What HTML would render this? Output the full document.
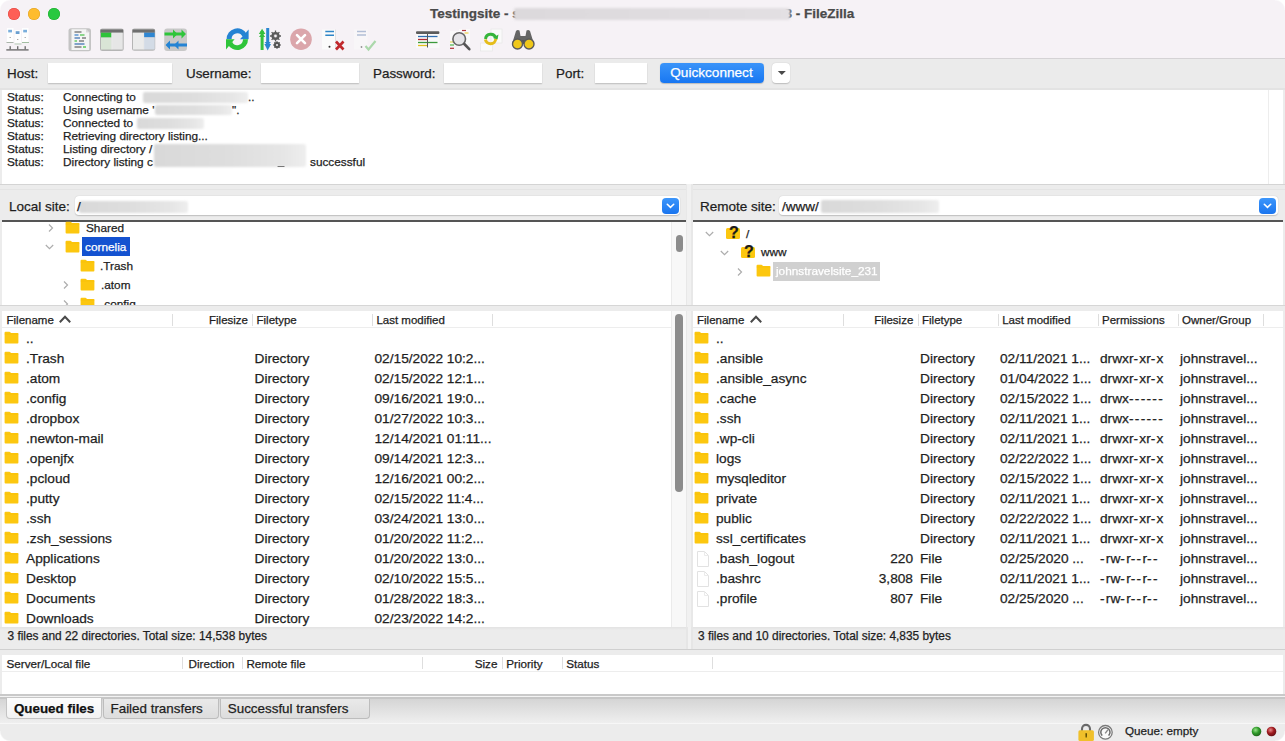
<!DOCTYPE html>
<html><head><meta charset="utf-8">
<style>
*{margin:0;padding:0;box-sizing:border-box}
html,body{width:1285px;height:741px;overflow:hidden;background:#ececec;font-family:"Liberation Sans",sans-serif;color:#1e1e1e}
.a{position:absolute}
.t{position:absolute;white-space:nowrap;line-height:1;-webkit-text-stroke:0.25px currentColor}
.inp{position:absolute;background:#fff;box-shadow:0 0.5px 1.2px rgba(0,0,0,.2)}
.blur{position:absolute;background:linear-gradient(90deg,#d9d9d9,#dedede 50%,#e6e6e6 85%,#eeeeee);filter:blur(1.2px);border-radius:2px}
.sep{position:absolute;width:1px;background:#e0e0e0}
</style></head><body>
<div class="a" style="left:0px;top:0px;width:1285px;height:58px;background:#f6f2f6;"></div>
<div class="a" style="left:0px;top:58px;width:1285px;height:1px;background:#d5d3d5;"></div>
<div class="a" style="left:8px;top:8px;width:12px;height:12px;border-radius:50%;background:#fe5f57;box-shadow:inset 0 0 0 0.5px #e0443e"></div>
<div class="a" style="left:28px;top:8px;width:12px;height:12px;border-radius:50%;background:#febc2e;box-shadow:inset 0 0 0 0.5px #dea123"></div>
<div class="a" style="left:48px;top:8px;width:12px;height:12px;border-radius:50%;background:#28c840;box-shadow:inset 0 0 0 0.5px #1aab29"></div>
<div class="t" style="left:430px;top:7.37px;font-size:13.5px;color:#4a4a4a;font-weight:bold;">Testingsite - s</div>
<div class="t" style="left:784.5px;top:7.37px;font-size:13.5px;color:#4a4a4a;font-weight:bold;">3 - FileZilla</div>
<div class="blur" style="left:514px;top:7.5px;width:276px;height:12px;background:linear-gradient(90deg,#dcd9dc,#e0dde0 60%,#e3e0e3)"></div>
<svg class="a" style="left:0;top:0" width="560" height="58" viewBox="0 0 560 58">
<!-- site manager -->
<g>
 <rect x="7" y="28" width="6.5" height="14" fill="#fff" opacity=".9"/>
 <rect x="14.5" y="30" width="6.5" height="13" fill="#fff" opacity=".9"/>
 <rect x="22" y="28" width="6.5" height="14" fill="#fff" opacity=".9"/>
 <rect x="8.2" y="29.8" width="3.8" height="2.6" fill="#7aaedc"/>
 <rect x="15.7" y="31.2" width="3.8" height="2.8" fill="#6a9fd0"/>
 <rect x="23.2" y="29.8" width="3.8" height="2.6" fill="#7aaedc"/>
 <rect x="9.6" y="37.2" width="1.2" height=".8" fill="#888"/>
 <rect x="17.1" y="39.2" width="1.2" height=".8" fill="#888"/>
 <rect x="24.6" y="37.2" width="1.2" height=".8" fill="#888"/>
 <rect x="6.5" y="42.2" width="7" height=".7" fill="#8a9a8a"/>
 <rect x="14.5" y="43.6" width="7" height=".8" fill="#a9c4a9"/>
 <rect x="22" y="42.2" width="7" height=".7" fill="#7fa87f"/>
 <rect x="9.5" y="46.2" width="1.4" height="3.2" fill="#707070"/>
 <rect x="17" y="46.2" width="1.4" height="3.2" fill="#707070"/>
 <rect x="24.5" y="46.2" width="1.4" height="3.2" fill="#707070"/>
 <rect x="6.3" y="49.2" width="22.3" height="1.4" fill="#6e6e6e"/>
</g>
<!-- message log -->
<g>
 <rect x="68.5" y="28.2" width="22.5" height="23" rx="2.5" fill="#c4c4c4"/>
 <path d="M71.5 29.2 H86 L89.2 32.4 V50 H71.5 Z" fill="#f4f4f4"/>
 <path d="M86 29.2 V32.4 H89.2 Z" fill="#d9d9d9"/>
 <g stroke-width="1.4">
 <path d="M74.5 32 H81.5" stroke="#777"/>
 <path d="M74.5 35 H78.5" stroke="#4f8fd0"/><path d="M80 35 H84.5" stroke="#5cc85c"/>
 <path d="M74.5 38 H80" stroke="#4f7fb8"/><path d="M82 38 H86" stroke="#777"/>
 <path d="M74.5 41 H77" stroke="#5cc85c"/><path d="M79 41 H84" stroke="#777"/>
 <path d="M74.5 44 H84.5" stroke="#4f7fb8"/>
 <path d="M74.5 47 H81.5" stroke="#777"/><path d="M83 47 H86" stroke="#4cc84c"/>
 </g>
</g>
<!-- local tree -->
<g>
 <rect x="100" y="28.5" width="23.7" height="22.5" rx="2.5" fill="#b5b5b5"/>
 <rect x="100.5" y="29.5" width="22.7" height="3.2" fill="#6e6e6e"/>
 <rect x="101" y="32.7" width="10.5" height="4.8" fill="#2fc23a"/>
 <rect x="101" y="37.5" width="10.5" height="12" fill="#d9e5d6"/>
 <rect x="112" y="32.7" width="10.7" height="16.8" fill="#e6e6e6"/>
 <rect x="111.5" y="32.7" width="0.6" height="16.8" fill="#fff"/>
</g>
<!-- remote tree -->
<g>
 <rect x="132" y="28.6" width="23.2" height="22.2" rx="2.5" fill="#b5b5b5"/>
 <rect x="132.5" y="29.5" width="22.2" height="3.2" fill="#6e6e6e"/>
 <rect x="133" y="32.7" width="10.5" height="16.8" fill="#ebebeb"/>
 <rect x="144" y="32.7" width="10.7" height="4.6" fill="#2f86d2"/>
 <rect x="144" y="37.3" width="10.7" height="12.2" fill="#d3dbe6"/>
 <rect x="143.5" y="32.7" width="0.6" height="16.8" fill="#fff"/>
</g>
<!-- transfer queue -->
<g>
 <rect x="164.2" y="28.6" width="22.8" height="22.4" rx="3" fill="#c8c8c8"/>
 <path d="M164.5 32.4 H173 V29.5 L177.5 34 L173 38.5 V35.6 H164.5 Z" fill="#2ec53a"/>
 <path d="M174 32.4 H181.5 V29.5 L186 34 L181.5 38.5 V35.6 H174 Z" fill="#2ec53a"/>
 <path d="M187 43.4 H178.5 V40.5 L174 45 L178.5 49.5 V46.6 H187 Z" fill="#2483d4"/>
 <path d="M178 43.4 H170 V40.5 L165.5 45 L170 49.5 V46.6 H178 Z" fill="#2483d4"/>
</g>
<!-- refresh -->
<g>
 <path d="M229.1 39.2 A8.2 8.2 0 0 1 244.6 35.3" stroke="#2583d3" stroke-width="5" fill="none"/>
 <path d="M240 39.2 L248.6 39.2 L248.6 29.6 Z" fill="#2583d3"/>
 <path d="M245.5 39.2 A8.2 8.2 0 0 1 230.0 43.1" stroke="#2fc43a" stroke-width="5" fill="none"/>
 <path d="M234.6 39.2 L226 39.2 L226 49.6 Z" fill="#2fc43a"/>
</g>
<!-- filter settings -->
<g>
 <rect x="260.6" y="31" width="3" height="19" fill="#34c03e"/>
 <path d="M258.8 34 L262.1 28.8 L265.4 34 Z" fill="#34c03e"/>
 <path d="M259 37 L262.1 33 L265.2 37 Z" fill="#34c03e"/>
 <rect x="266.2" y="28" width="3" height="19" fill="#2a85d0"/>
 <path d="M264.4 44 L267.7 50.5 L271 44 Z" fill="#2a85d0"/>
 <path d="M264.6 42 L267.7 46 L270.8 42 Z" fill="#2a85d0"/>
 <circle cx="275.5" cy="36" r="3.1" fill="none" stroke="#5a5a5a" stroke-width="2"/>
 <g stroke="#5a5a5a" stroke-width="1.3">
  <path d="M275.5 30.5 V41.5 M270 36 H281 M271.6 32.1 L279.4 39.9 M271.6 39.9 L279.4 32.1"/>
 </g>
 <circle cx="275.5" cy="36" r="1.4" fill="#f6f2f6"/>
 <circle cx="277" cy="45" r="2.2" fill="none" stroke="#555" stroke-width="1.8"/>
 <g stroke="#555" stroke-width="1.3">
  <path d="M277 41.3 V48.7 M273.3 45 H280.7 M274.4 42.4 L279.6 47.6 M274.4 47.6 L279.6 42.4"/>
 </g>
 <circle cx="277" cy="45" r="1" fill="#f6f2f6"/>
</g>
<!-- cancel -->
<g>
 <circle cx="301" cy="39.2" r="10.8" fill="#dba6ab"/>
 <path d="M297 35.2 L305 43.2 M305 35.2 L297 43.2" stroke="#fff" stroke-width="2.6" stroke-linecap="round"/>
</g>
<!-- disconnect -->
<g>
 <path d="M322 29.5 H335.5 V49.5 H322 Z" fill="#fbfbfb"/>
 <path d="M335.5 29.5 V49.5" stroke="#e2e2e2" stroke-width="1"/>
 <path d="M325.3 31.5 H334 M325.3 35.3 H334" stroke="#2f86c8" stroke-width="1.6"/>
 <circle cx="329.5" cy="46.7" r="1" fill="#333"/>
 <path d="M336 41.5 L343.5 49.5 M343.5 41.5 L336 49.5" stroke="#c0282c" stroke-width="2.6"/>
</g>
<!-- reconnect -->
<g opacity=".55">
 <path d="M354 29.5 H367.5 V49.5 H354 Z" fill="#fbfbfb"/>
 <path d="M357 31.5 H366 M357 35 H366" stroke="#7b95bd" stroke-width="1.5"/>
 <circle cx="361.5" cy="47" r="0.9" fill="#444"/>
 <path d="M365.5 46 L368.5 49.5 L375.5 41" stroke="#6fc36f" stroke-width="2.2" fill="none"/>
</g>
<!-- directory listing filter -->
<g>
 <rect x="416" y="31.5" width="23.4" height="16.5" fill="#f9f9f9"/>
 <rect x="416" y="31.2" width="23.4" height="2.8" rx="1" fill="#5c5c5c"/>
 <path d="M418 36.5 H437.5" stroke="#2f6fb2" stroke-width="1.3"/>
 <path d="M418 39.5 H427" stroke="#b12b33" stroke-width="1.3"/>
 <path d="M418 42.5 H437.5" stroke="#3b9a3b" stroke-width="1.3"/>
 <path d="M418 45.5 H427" stroke="#e0c020" stroke-width="1.3"/>
 <path d="M427.5 34 V47.5" stroke="#555" stroke-width="1"/>
</g>
<!-- search -->
<g>
 <rect x="450" y="31" width="12" height="15" fill="#fafafa"/>
 <rect x="459" y="29" width="11" height="15" fill="#fafafa"/>
 <path d="M462 30.5 H466" stroke="#b53a3f" stroke-width="1.2"/>
 <path d="M464.5 33 H468.5" stroke="#ecd24a" stroke-width="1.2"/>
 <path d="M450 42 H454" stroke="#e8d85a" stroke-width="1.2"/>
 <path d="M450 45 H454" stroke="#48b048" stroke-width="1.2"/>
 <path d="M450 48.3 H454" stroke="#b03038" stroke-width="1.2"/>
 <circle cx="459.2" cy="39" r="6.3" fill="#e5e5e8" stroke="#666" stroke-width="1.6"/>
 <path d="M464.3 44 L469.3 49.2" stroke="#555" stroke-width="2.6" stroke-linecap="round"/>
</g>
<!-- compare -->
<g>
 <rect x="491" y="29" width="11" height="14" fill="#fafafa" stroke="#e4e4e4" stroke-width=".6"/>
 <rect x="480.5" y="43" width="12" height="8" fill="#fafafa" stroke="#e4e4e4" stroke-width=".6"/>
 <path d="M485.5 39 A5.3 5.3 0 0 1 495.8 38" stroke="#35b43a" stroke-width="3" fill="none"/>
 <path d="M498.5 34.5 L497.5 39.5 L493 38 Z" fill="#35b43a"/>
 <path d="M495.7 39 A5.2 5.2 0 0 1 485.4 39.5" stroke="#e5bd1a" stroke-width="3" fill="none"/>
</g>
<!-- binoculars -->
<g>
 <path d="M516 31 Q517.5 29.5 519.5 30.5 L520.5 36 L525.5 36 L526.5 30.5 Q528.5 29.5 530 31 L534 44 H512 Z" fill="#656565"/>
 <rect x="521" y="40" width="4" height="4" fill="#555"/>
 <circle cx="517.5" cy="44" r="5" fill="#f0c81a" stroke="#5a5a5a" stroke-width="1.4"/>
 <circle cx="529" cy="44" r="5" fill="#f0c81a" stroke="#5a5a5a" stroke-width="1.4"/>
</g>
</svg>
<div class="a" style="left:0px;top:59px;width:1285px;height:30px;background:#ebebeb;"></div>
<div class="a" style="left:0px;top:88px;width:1285px;height:2px;background:#e3e3e3;"></div>
<div class="t" style="left:7px;top:67.06px;font-size:13.4px;color:#1e1e1e;font-weight:normal;">Host:</div>
<div class="inp" style="left:48px;top:63px;width:124px;height:20.3px"></div>
<div class="t" style="left:186px;top:67.06px;font-size:13.4px;color:#1e1e1e;font-weight:normal;">Username:</div>
<div class="inp" style="left:261px;top:63px;width:98px;height:20.3px"></div>
<div class="t" style="left:373px;top:67.06px;font-size:13.4px;color:#1e1e1e;font-weight:normal;">Password:</div>
<div class="inp" style="left:444px;top:63px;width:98px;height:20.3px"></div>
<div class="t" style="left:556px;top:67.06px;font-size:13.4px;color:#1e1e1e;font-weight:normal;">Port:</div>
<div class="inp" style="left:594.7px;top:63px;width:52.3px;height:20.3px"></div>
<div class="a" style="left:660px;top:63px;width:104px;height:20px;border-radius:4px;background:linear-gradient(#3a94f9,#1877f2);box-shadow:0 0.5px 1px rgba(0,0,0,.2)"></div>
<div class="t" style="left:670.3px;top:65.99px;font-size:13.6px;color:#fff;font-weight:normal;">Quickconnect</div>
<div class="inp" style="left:771.8px;top:63px;width:18.4px;height:20.2px;border-radius:4px"></div>
<svg class="a" style="left:775.5px;top:69.3px" width="11" height="8"><path d="M1.8 2 L9.8 2 L5.8 6 Z" fill="#4a4a4a"/></svg>
<div class="a" style="left:2px;top:90px;width:1281px;height:94px;background:#fff;"></div>
<div class="a" style="left:1268px;top:90px;width:1px;height:94px;background:#ededed;"></div>
<div class="t" style="left:7px;top:92.41px;font-size:11.8px;color:#1e1e1e;font-weight:normal;">Status:</div>
<div class="t" style="left:63px;top:92.41px;font-size:11.8px;color:#1e1e1e;font-weight:normal;">Connecting to</div>
<div class="t" style="left:7px;top:105.36px;font-size:11.8px;color:#1e1e1e;font-weight:normal;">Status:</div>
<div class="t" style="left:63px;top:105.36px;font-size:11.8px;color:#1e1e1e;font-weight:normal;">Using username '</div>
<div class="t" style="left:7px;top:118.31px;font-size:11.8px;color:#1e1e1e;font-weight:normal;">Status:</div>
<div class="t" style="left:63px;top:118.31px;font-size:11.8px;color:#1e1e1e;font-weight:normal;">Connected to</div>
<div class="t" style="left:7px;top:131.26px;font-size:11.8px;color:#1e1e1e;font-weight:normal;">Status:</div>
<div class="t" style="left:63px;top:131.26px;font-size:11.8px;color:#1e1e1e;font-weight:normal;">Retrieving directory listing...</div>
<div class="t" style="left:7px;top:144.21px;font-size:11.8px;color:#1e1e1e;font-weight:normal;">Status:</div>
<div class="t" style="left:63px;top:144.21px;font-size:11.8px;color:#1e1e1e;font-weight:normal;">Listing directory /</div>
<div class="t" style="left:7px;top:157.16px;font-size:11.8px;color:#1e1e1e;font-weight:normal;">Status:</div>
<div class="t" style="left:63px;top:157.16px;font-size:11.8px;color:#1e1e1e;font-weight:normal;">Directory listing c</div>
<div class="t" style="left:310px;top:157.16px;font-size:11.8px;color:#1e1e1e;font-weight:normal;">successful</div>
<div class="blur" style="left:143px;top:92px;width:105px;height:11px"></div>
<div class="t" style="left:248px;top:92.41px;font-size:11.8px;color:#1e1e1e;font-weight:normal;">..</div>
<div class="blur" style="left:155px;top:105px;width:77px;height:10px"></div>
<div class="t" style="left:232px;top:105.36px;font-size:11.8px;color:#1e1e1e;font-weight:normal;">".</div>
<div class="blur" style="left:137px;top:118px;width:67px;height:11px"></div>
<div class="blur" style="left:154px;top:144.3px;width:152px;height:22.5px"></div><div class="t" style="left:278px;top:156px;font-size:11px;color:#666;filter:blur(0.4px)">_</div>
<div class="a" style="left:0px;top:184px;width:1285px;height:1px;background:#d4d4d4;"></div>
<div class="a" style="left:0px;top:189px;width:1285px;height:1px;background:#e4e4e4;"></div>
<div class="t" style="left:9px;top:199.77px;font-size:13.5px;color:#1e1e1e;font-weight:normal;">Local site:</div>
<div class="inp" style="left:75px;top:196px;width:605px;height:19px;border-radius:4px"></div>
<div class="blur" style="left:79px;top:201px;width:108.5px;height:12.2px"></div>
<div class="t" style="left:77px;top:199.77px;font-size:13.5px;color:#1e1e1e;font-weight:normal;">/</div>
<div class="t" style="left:700px;top:199.77px;font-size:13.5px;color:#1e1e1e;font-weight:normal;">Remote site:</div>
<div class="inp" style="left:779px;top:196px;width:498.5px;height:19px;border-radius:4px"></div>
<div class="t" style="left:782px;top:199.77px;font-size:13.5px;color:#1e1e1e;font-weight:normal;">/www/</div>
<div class="blur" style="left:820.5px;top:200px;width:118.3px;height:12.6px"></div>
<div class="a" style="left:662px;top:198px;width:17px;height:15.5px;border-radius:4px;background:linear-gradient(#3c96fb,#1a75ef)"></div>
<svg class="a" style="left:662px;top:198px" width="17" height="16"><path d="M5.3 6.3 L8.5 9.4 L11.7 6.3" stroke="#fff" stroke-width="1.6" fill="none" stroke-linecap="round"/></svg>
<div class="a" style="left:1259px;top:198px;width:17px;height:15.5px;border-radius:4px;background:linear-gradient(#3c96fb,#1a75ef)"></div>
<svg class="a" style="left:1259px;top:198px" width="17" height="16"><path d="M5.3 6.3 L8.5 9.4 L11.7 6.3" stroke="#fff" stroke-width="1.6" fill="none" stroke-linecap="round"/></svg>
<div class="a" style="left:686px;top:184px;width:7px;height:465px;background:#e8e8e8;"></div>
<div class="a" style="left:687.4px;top:184px;width:4px;height:465px;background:#f1f1f1;"></div>
<div class="a" style="left:2px;top:220px;width:684px;height:85px;background:#fff;"></div>
<div class="a" style="left:2px;top:220px;width:684px;height:1.5px;background:#555;"></div>
<div class="a" style="left:693px;top:220px;width:590px;height:85px;background:#fff;"></div>
<div class="a" style="left:693px;top:220px;width:590px;height:1.5px;background:#555;"></div>
<div class="a" style="left:0px;top:305px;width:1285px;height:1px;background:#d6d6d6;"></div>
<div class="a" style="left:671px;top:221.5px;width:15px;height:83.5px;background:#f8f8f8;"></div>
<div class="a" style="left:671px;top:221.5px;width:1px;height:83.5px;background:#ebebeb;"></div>
<div class="a" style="left:675.5px;top:234.6px;width:7.5px;height:17.7px;border-radius:4px;background:#8c8c8c"></div>
<svg class="a" style="left:46.5px;top:223px" width="8" height="10"><path d="M2 1.5 L5.5 5 L2 8.5" stroke="#adadad" stroke-width="1.2" fill="none"/></svg>
<svg class="a" style="left:64.5px;top:221px" width="16" height="14" viewBox="0 0 16 14"><path d="M0.6 1.6 Q0.6 0.7 1.5 0.7 H5.4 Q6 0.7 6.4 1.2 L6.9 1.9 H13.5 Q14.4 1.9 14.4 2.8 V11.6 Q14.4 12.5 13.5 12.5 H1.5 Q0.6 12.5 0.6 11.6 Z" fill="#fcc70f"/><path d="M0.6 3 H14.4" stroke="#f4b800" stroke-width=".5"/></svg>
<div class="t" style="left:86px;top:222.51px;font-size:11.8px;color:#1e1e1e;font-weight:normal;">Shared</div>
<svg class="a" style="left:44px;top:243px" width="11" height="8"><path d="M1.8 2 L5.5 5.6 L9.2 2" stroke="#adadad" stroke-width="1.2" fill="none"/></svg>
<svg class="a" style="left:64.5px;top:240px" width="16" height="14" viewBox="0 0 16 14"><path d="M0.6 1.6 Q0.6 0.7 1.5 0.7 H5.4 Q6 0.7 6.4 1.2 L6.9 1.9 H13.5 Q14.4 1.9 14.4 2.8 V11.6 Q14.4 12.5 13.5 12.5 H1.5 Q0.6 12.5 0.6 11.6 Z" fill="#fcc70f"/><path d="M0.6 3 H14.4" stroke="#f4b800" stroke-width=".5"/></svg>
<div class="a" style="left:82.3px;top:237.2px;width:47.7px;height:18.6px;background:#1452d0;"></div>
<div class="t" style="left:85px;top:241.51px;font-size:11.8px;color:#fff;font-weight:normal;">cornelia</div>
<svg class="a" style="left:79.5px;top:259px" width="16" height="14" viewBox="0 0 16 14"><path d="M0.6 1.6 Q0.6 0.7 1.5 0.7 H5.4 Q6 0.7 6.4 1.2 L6.9 1.9 H13.5 Q14.4 1.9 14.4 2.8 V11.6 Q14.4 12.5 13.5 12.5 H1.5 Q0.6 12.5 0.6 11.6 Z" fill="#fcc70f"/><path d="M0.6 3 H14.4" stroke="#f4b800" stroke-width=".5"/></svg>
<div class="t" style="left:100px;top:260.51px;font-size:11.8px;color:#1e1e1e;font-weight:normal;">.Trash</div>
<svg class="a" style="left:61.7px;top:280px" width="8" height="10"><path d="M2 1.5 L5.5 5 L2 8.5" stroke="#adadad" stroke-width="1.2" fill="none"/></svg>
<svg class="a" style="left:79.5px;top:278px" width="16" height="14" viewBox="0 0 16 14"><path d="M0.6 1.6 Q0.6 0.7 1.5 0.7 H5.4 Q6 0.7 6.4 1.2 L6.9 1.9 H13.5 Q14.4 1.9 14.4 2.8 V11.6 Q14.4 12.5 13.5 12.5 H1.5 Q0.6 12.5 0.6 11.6 Z" fill="#fcc70f"/><path d="M0.6 3 H14.4" stroke="#f4b800" stroke-width=".5"/></svg>
<div class="t" style="left:101px;top:279.51px;font-size:11.8px;color:#1e1e1e;font-weight:normal;">.atom</div>
<svg class="a" style="left:61.7px;top:299px" width="8" height="10"><path d="M2 1.5 L5.5 5 L2 8.5" stroke="#adadad" stroke-width="1.2" fill="none"/></svg>
<svg class="a" style="left:79.5px;top:297px" width="16" height="14" viewBox="0 0 16 14"><path d="M0.6 1.6 Q0.6 0.7 1.5 0.7 H5.4 Q6 0.7 6.4 1.2 L6.9 1.9 H13.5 Q14.4 1.9 14.4 2.8 V11.6 Q14.4 12.5 13.5 12.5 H1.5 Q0.6 12.5 0.6 11.6 Z" fill="#fcc70f"/><path d="M0.6 3 H14.4" stroke="#f4b800" stroke-width=".5"/></svg>
<div class="t" style="left:101px;top:298.51px;font-size:11.8px;color:#1e1e1e;font-weight:normal;">.config</div>
<div class="a" style="left:0px;top:305px;width:1285px;height:6px;background:#ececec;"></div>
<div class="a" style="left:0px;top:305px;width:1285px;height:1px;background:#d6d6d6;"></div>
<svg class="a" style="left:704px;top:230px" width="11" height="8"><path d="M1.8 2 L5.5 5.6 L9.2 2" stroke="#adadad" stroke-width="1.2" fill="none"/></svg>
<div class="a" style="left:726px;top:226px;width:14px;height:13px"><div class="a" style="left:0;top:2px;width:14px;height:11px;background:#fcc70f;border-radius:1.5px"></div><div class="t" style="left:3px;top:-1px;font-size:16px;font-weight:bold;color:#1a1a1a">?</div></div>
<div class="t" style="left:746px;top:229.21px;font-size:11.8px;color:#1e1e1e;font-weight:normal;">/</div>
<svg class="a" style="left:719px;top:249px" width="11" height="8"><path d="M1.8 2 L5.5 5.6 L9.2 2" stroke="#adadad" stroke-width="1.2" fill="none"/></svg>
<div class="a" style="left:741px;top:245px;width:14px;height:13px"><div class="a" style="left:0;top:2px;width:14px;height:11px;background:#fcc70f;border-radius:1.5px"></div><div class="t" style="left:3px;top:-1px;font-size:16px;font-weight:bold;color:#1a1a1a">?</div></div>
<div class="t" style="left:761px;top:246.81px;font-size:11.8px;color:#1e1e1e;font-weight:normal;">www</div>
<svg class="a" style="left:736px;top:267px" width="8" height="10"><path d="M2 1.5 L5.5 5 L2 8.5" stroke="#adadad" stroke-width="1.2" fill="none"/></svg>
<svg class="a" style="left:755.5px;top:263.5px" width="16" height="14" viewBox="0 0 16 14"><path d="M0.6 1.6 Q0.6 0.7 1.5 0.7 H5.4 Q6 0.7 6.4 1.2 L6.9 1.9 H13.5 Q14.4 1.9 14.4 2.8 V11.6 Q14.4 12.5 13.5 12.5 H1.5 Q0.6 12.5 0.6 11.6 Z" fill="#fcc70f"/><path d="M0.6 3 H14.4" stroke="#f4b800" stroke-width=".5"/></svg>
<div class="a" style="left:772.9px;top:261.6px;width:107.1px;height:19.4px;background:#d0d0d0;"></div>
<div class="t" style="left:776px;top:266.31px;font-size:11.8px;color:#fff;font-weight:normal;filter:blur(0.6px)">johnstravelsite_231</div>
<div class="a" style="left:2px;top:311px;width:684px;height:317px;background:#fff;"></div>
<div class="a" style="left:693px;top:311px;width:590px;height:317px;background:#fff;"></div>
<div class="a" style="left:2px;top:327px;width:669px;height:1px;background:#ededed;"></div>
<div class="a" style="left:693px;top:327px;width:590px;height:1px;background:#ededed;"></div>
<div class="a" style="left:671px;top:311px;width:15px;height:317px;background:#f8f8f8;"></div>
<div class="a" style="left:671px;top:311px;width:1px;height:317px;background:#ebebeb;"></div>
<div class="a" style="left:675.2px;top:313.8px;width:7.8px;height:178px;border-radius:4px;background:#8c8c8c"></div>
<div class="t" style="left:6.5px;top:315.07px;font-size:11.5px;color:#1e1e1e;font-weight:normal;">Filename</div>
<svg class="a" style="left:58px;top:314px" width="14" height="10"><path d="M1.8 8.3 L7 2.8 L12.2 8.3" stroke="#4a4a4a" stroke-width="2" fill="none"/></svg>
<div class="t" style="right:1037px;top:315.07px;font-size:11.5px;color:#1e1e1e">Filesize</div>
<div class="t" style="left:256.5px;top:315.07px;font-size:11.5px;color:#1e1e1e;font-weight:normal;">Filetype</div>
<div class="t" style="left:376.4px;top:315.07px;font-size:11.5px;color:#1e1e1e;font-weight:normal;">Last modified</div>
<div class="a" style="left:172px;top:314px;width:1px;height:12px;background:#dedede;"></div>
<div class="a" style="left:252px;top:314px;width:1px;height:12px;background:#dedede;"></div>
<div class="a" style="left:371.5px;top:314px;width:1px;height:12px;background:#dedede;"></div>
<div class="a" style="left:492px;top:314px;width:1px;height:12px;background:#dedede;"></div>
<div class="t" style="left:697px;top:315.07px;font-size:11.5px;color:#1e1e1e;font-weight:normal;">Filename</div>
<svg class="a" style="left:749px;top:314px" width="14" height="10"><path d="M1.8 8.3 L7 2.8 L12.2 8.3" stroke="#4a4a4a" stroke-width="2" fill="none"/></svg>
<div class="t" style="right:371.70000000000005px;top:315.07px;font-size:11.5px;color:#1e1e1e">Filesize</div>
<div class="t" style="left:922px;top:315.07px;font-size:11.5px;color:#1e1e1e;font-weight:normal;">Filetype</div>
<div class="t" style="left:1002.2px;top:315.07px;font-size:11.5px;color:#1e1e1e;font-weight:normal;">Last modified</div>
<div class="t" style="left:1102px;top:315.07px;font-size:11.5px;color:#1e1e1e;font-weight:normal;">Permissions</div>
<div class="t" style="left:1182px;top:315.07px;font-size:11.5px;color:#1e1e1e;font-weight:normal;">Owner/Group</div>
<div class="a" style="left:843px;top:314px;width:1px;height:12px;background:#dedede;"></div>
<div class="a" style="left:918px;top:314px;width:1px;height:12px;background:#dedede;"></div>
<div class="a" style="left:997.5px;top:314px;width:1px;height:12px;background:#dedede;"></div>
<div class="a" style="left:1097.5px;top:314px;width:1px;height:12px;background:#dedede;"></div>
<div class="a" style="left:1177.5px;top:314px;width:1px;height:12px;background:#dedede;"></div>
<div class="a" style="left:1263px;top:314px;width:1px;height:12px;background:#dedede;"></div>
<svg class="a" style="left:3.8px;top:331.40000000000003px" width="16" height="14" viewBox="0 0 16 14"><path d="M0.6 1.6 Q0.6 0.7 1.5 0.7 H5.4 Q6 0.7 6.4 1.2 L6.9 1.9 H13.5 Q14.4 1.9 14.4 2.8 V11.6 Q14.4 12.5 13.5 12.5 H1.5 Q0.6 12.5 0.6 11.6 Z" fill="#fcc70f"/><path d="M0.6 3 H14.4" stroke="#f4b800" stroke-width=".5"/></svg>
<div class="t" style="left:26px;top:332.00px;font-size:13.7px;color:#1e1e1e;font-weight:normal;">..</div>
<svg class="a" style="left:3.8px;top:351.40000000000003px" width="16" height="14" viewBox="0 0 16 14"><path d="M0.6 1.6 Q0.6 0.7 1.5 0.7 H5.4 Q6 0.7 6.4 1.2 L6.9 1.9 H13.5 Q14.4 1.9 14.4 2.8 V11.6 Q14.4 12.5 13.5 12.5 H1.5 Q0.6 12.5 0.6 11.6 Z" fill="#fcc70f"/><path d="M0.6 3 H14.4" stroke="#f4b800" stroke-width=".5"/></svg>
<div class="t" style="left:26px;top:352.00px;font-size:13.7px;color:#1e1e1e;font-weight:normal;">.Trash</div>
<div class="t" style="left:254.5px;top:352.00px;font-size:13.7px;color:#1e1e1e;font-weight:normal;">Directory</div>
<div class="t" style="left:374.5px;top:352.00px;font-size:13.7px;color:#1e1e1e;font-weight:normal;">02/15/2022 10:2...</div>
<svg class="a" style="left:3.8px;top:371.40000000000003px" width="16" height="14" viewBox="0 0 16 14"><path d="M0.6 1.6 Q0.6 0.7 1.5 0.7 H5.4 Q6 0.7 6.4 1.2 L6.9 1.9 H13.5 Q14.4 1.9 14.4 2.8 V11.6 Q14.4 12.5 13.5 12.5 H1.5 Q0.6 12.5 0.6 11.6 Z" fill="#fcc70f"/><path d="M0.6 3 H14.4" stroke="#f4b800" stroke-width=".5"/></svg>
<div class="t" style="left:26px;top:372.00px;font-size:13.7px;color:#1e1e1e;font-weight:normal;">.atom</div>
<div class="t" style="left:254.5px;top:372.00px;font-size:13.7px;color:#1e1e1e;font-weight:normal;">Directory</div>
<div class="t" style="left:374.5px;top:372.00px;font-size:13.7px;color:#1e1e1e;font-weight:normal;">02/15/2022 12:1...</div>
<svg class="a" style="left:3.8px;top:391.40000000000003px" width="16" height="14" viewBox="0 0 16 14"><path d="M0.6 1.6 Q0.6 0.7 1.5 0.7 H5.4 Q6 0.7 6.4 1.2 L6.9 1.9 H13.5 Q14.4 1.9 14.4 2.8 V11.6 Q14.4 12.5 13.5 12.5 H1.5 Q0.6 12.5 0.6 11.6 Z" fill="#fcc70f"/><path d="M0.6 3 H14.4" stroke="#f4b800" stroke-width=".5"/></svg>
<div class="t" style="left:26px;top:392.00px;font-size:13.7px;color:#1e1e1e;font-weight:normal;">.config</div>
<div class="t" style="left:254.5px;top:392.00px;font-size:13.7px;color:#1e1e1e;font-weight:normal;">Directory</div>
<div class="t" style="left:374.5px;top:392.00px;font-size:13.7px;color:#1e1e1e;font-weight:normal;">09/16/2021 19:0...</div>
<svg class="a" style="left:3.8px;top:411.40000000000003px" width="16" height="14" viewBox="0 0 16 14"><path d="M0.6 1.6 Q0.6 0.7 1.5 0.7 H5.4 Q6 0.7 6.4 1.2 L6.9 1.9 H13.5 Q14.4 1.9 14.4 2.8 V11.6 Q14.4 12.5 13.5 12.5 H1.5 Q0.6 12.5 0.6 11.6 Z" fill="#fcc70f"/><path d="M0.6 3 H14.4" stroke="#f4b800" stroke-width=".5"/></svg>
<div class="t" style="left:26px;top:412.00px;font-size:13.7px;color:#1e1e1e;font-weight:normal;">.dropbox</div>
<div class="t" style="left:254.5px;top:412.00px;font-size:13.7px;color:#1e1e1e;font-weight:normal;">Directory</div>
<div class="t" style="left:374.5px;top:412.00px;font-size:13.7px;color:#1e1e1e;font-weight:normal;">01/27/2022 10:3...</div>
<svg class="a" style="left:3.8px;top:431.40000000000003px" width="16" height="14" viewBox="0 0 16 14"><path d="M0.6 1.6 Q0.6 0.7 1.5 0.7 H5.4 Q6 0.7 6.4 1.2 L6.9 1.9 H13.5 Q14.4 1.9 14.4 2.8 V11.6 Q14.4 12.5 13.5 12.5 H1.5 Q0.6 12.5 0.6 11.6 Z" fill="#fcc70f"/><path d="M0.6 3 H14.4" stroke="#f4b800" stroke-width=".5"/></svg>
<div class="t" style="left:26px;top:432.00px;font-size:13.7px;color:#1e1e1e;font-weight:normal;">.newton-mail</div>
<div class="t" style="left:254.5px;top:432.00px;font-size:13.7px;color:#1e1e1e;font-weight:normal;">Directory</div>
<div class="t" style="left:374.5px;top:432.00px;font-size:13.7px;color:#1e1e1e;font-weight:normal;">12/14/2021 01:11...</div>
<svg class="a" style="left:3.8px;top:451.40000000000003px" width="16" height="14" viewBox="0 0 16 14"><path d="M0.6 1.6 Q0.6 0.7 1.5 0.7 H5.4 Q6 0.7 6.4 1.2 L6.9 1.9 H13.5 Q14.4 1.9 14.4 2.8 V11.6 Q14.4 12.5 13.5 12.5 H1.5 Q0.6 12.5 0.6 11.6 Z" fill="#fcc70f"/><path d="M0.6 3 H14.4" stroke="#f4b800" stroke-width=".5"/></svg>
<div class="t" style="left:26px;top:452.00px;font-size:13.7px;color:#1e1e1e;font-weight:normal;">.openjfx</div>
<div class="t" style="left:254.5px;top:452.00px;font-size:13.7px;color:#1e1e1e;font-weight:normal;">Directory</div>
<div class="t" style="left:374.5px;top:452.00px;font-size:13.7px;color:#1e1e1e;font-weight:normal;">09/14/2021 12:3...</div>
<svg class="a" style="left:3.8px;top:471.40000000000003px" width="16" height="14" viewBox="0 0 16 14"><path d="M0.6 1.6 Q0.6 0.7 1.5 0.7 H5.4 Q6 0.7 6.4 1.2 L6.9 1.9 H13.5 Q14.4 1.9 14.4 2.8 V11.6 Q14.4 12.5 13.5 12.5 H1.5 Q0.6 12.5 0.6 11.6 Z" fill="#fcc70f"/><path d="M0.6 3 H14.4" stroke="#f4b800" stroke-width=".5"/></svg>
<div class="t" style="left:26px;top:472.00px;font-size:13.7px;color:#1e1e1e;font-weight:normal;">.pcloud</div>
<div class="t" style="left:254.5px;top:472.00px;font-size:13.7px;color:#1e1e1e;font-weight:normal;">Directory</div>
<div class="t" style="left:374.5px;top:472.00px;font-size:13.7px;color:#1e1e1e;font-weight:normal;">12/16/2021 00:2...</div>
<svg class="a" style="left:3.8px;top:491.40000000000003px" width="16" height="14" viewBox="0 0 16 14"><path d="M0.6 1.6 Q0.6 0.7 1.5 0.7 H5.4 Q6 0.7 6.4 1.2 L6.9 1.9 H13.5 Q14.4 1.9 14.4 2.8 V11.6 Q14.4 12.5 13.5 12.5 H1.5 Q0.6 12.5 0.6 11.6 Z" fill="#fcc70f"/><path d="M0.6 3 H14.4" stroke="#f4b800" stroke-width=".5"/></svg>
<div class="t" style="left:26px;top:492.00px;font-size:13.7px;color:#1e1e1e;font-weight:normal;">.putty</div>
<div class="t" style="left:254.5px;top:492.00px;font-size:13.7px;color:#1e1e1e;font-weight:normal;">Directory</div>
<div class="t" style="left:374.5px;top:492.00px;font-size:13.7px;color:#1e1e1e;font-weight:normal;">02/15/2022 11:4...</div>
<svg class="a" style="left:3.8px;top:511.40000000000003px" width="16" height="14" viewBox="0 0 16 14"><path d="M0.6 1.6 Q0.6 0.7 1.5 0.7 H5.4 Q6 0.7 6.4 1.2 L6.9 1.9 H13.5 Q14.4 1.9 14.4 2.8 V11.6 Q14.4 12.5 13.5 12.5 H1.5 Q0.6 12.5 0.6 11.6 Z" fill="#fcc70f"/><path d="M0.6 3 H14.4" stroke="#f4b800" stroke-width=".5"/></svg>
<div class="t" style="left:26px;top:512.00px;font-size:13.7px;color:#1e1e1e;font-weight:normal;">.ssh</div>
<div class="t" style="left:254.5px;top:512.00px;font-size:13.7px;color:#1e1e1e;font-weight:normal;">Directory</div>
<div class="t" style="left:374.5px;top:512.00px;font-size:13.7px;color:#1e1e1e;font-weight:normal;">03/24/2021 13:0...</div>
<svg class="a" style="left:3.8px;top:531.4px" width="16" height="14" viewBox="0 0 16 14"><path d="M0.6 1.6 Q0.6 0.7 1.5 0.7 H5.4 Q6 0.7 6.4 1.2 L6.9 1.9 H13.5 Q14.4 1.9 14.4 2.8 V11.6 Q14.4 12.5 13.5 12.5 H1.5 Q0.6 12.5 0.6 11.6 Z" fill="#fcc70f"/><path d="M0.6 3 H14.4" stroke="#f4b800" stroke-width=".5"/></svg>
<div class="t" style="left:26px;top:532.00px;font-size:13.7px;color:#1e1e1e;font-weight:normal;">.zsh_sessions</div>
<div class="t" style="left:254.5px;top:532.00px;font-size:13.7px;color:#1e1e1e;font-weight:normal;">Directory</div>
<div class="t" style="left:374.5px;top:532.00px;font-size:13.7px;color:#1e1e1e;font-weight:normal;">01/20/2022 11:2...</div>
<svg class="a" style="left:3.8px;top:551.4px" width="16" height="14" viewBox="0 0 16 14"><path d="M0.6 1.6 Q0.6 0.7 1.5 0.7 H5.4 Q6 0.7 6.4 1.2 L6.9 1.9 H13.5 Q14.4 1.9 14.4 2.8 V11.6 Q14.4 12.5 13.5 12.5 H1.5 Q0.6 12.5 0.6 11.6 Z" fill="#fcc70f"/><path d="M0.6 3 H14.4" stroke="#f4b800" stroke-width=".5"/></svg>
<div class="t" style="left:26px;top:552.00px;font-size:13.7px;color:#1e1e1e;font-weight:normal;">Applications</div>
<div class="t" style="left:254.5px;top:552.00px;font-size:13.7px;color:#1e1e1e;font-weight:normal;">Directory</div>
<div class="t" style="left:374.5px;top:552.00px;font-size:13.7px;color:#1e1e1e;font-weight:normal;">01/20/2022 13:0...</div>
<svg class="a" style="left:3.8px;top:571.4px" width="16" height="14" viewBox="0 0 16 14"><path d="M0.6 1.6 Q0.6 0.7 1.5 0.7 H5.4 Q6 0.7 6.4 1.2 L6.9 1.9 H13.5 Q14.4 1.9 14.4 2.8 V11.6 Q14.4 12.5 13.5 12.5 H1.5 Q0.6 12.5 0.6 11.6 Z" fill="#fcc70f"/><path d="M0.6 3 H14.4" stroke="#f4b800" stroke-width=".5"/></svg>
<div class="t" style="left:26px;top:572.00px;font-size:13.7px;color:#1e1e1e;font-weight:normal;">Desktop</div>
<div class="t" style="left:254.5px;top:572.00px;font-size:13.7px;color:#1e1e1e;font-weight:normal;">Directory</div>
<div class="t" style="left:374.5px;top:572.00px;font-size:13.7px;color:#1e1e1e;font-weight:normal;">02/10/2022 15:5...</div>
<svg class="a" style="left:3.8px;top:591.4px" width="16" height="14" viewBox="0 0 16 14"><path d="M0.6 1.6 Q0.6 0.7 1.5 0.7 H5.4 Q6 0.7 6.4 1.2 L6.9 1.9 H13.5 Q14.4 1.9 14.4 2.8 V11.6 Q14.4 12.5 13.5 12.5 H1.5 Q0.6 12.5 0.6 11.6 Z" fill="#fcc70f"/><path d="M0.6 3 H14.4" stroke="#f4b800" stroke-width=".5"/></svg>
<div class="t" style="left:26px;top:592.00px;font-size:13.7px;color:#1e1e1e;font-weight:normal;">Documents</div>
<div class="t" style="left:254.5px;top:592.00px;font-size:13.7px;color:#1e1e1e;font-weight:normal;">Directory</div>
<div class="t" style="left:374.5px;top:592.00px;font-size:13.7px;color:#1e1e1e;font-weight:normal;">01/28/2022 18:3...</div>
<svg class="a" style="left:3.8px;top:611.4px" width="16" height="14" viewBox="0 0 16 14"><path d="M0.6 1.6 Q0.6 0.7 1.5 0.7 H5.4 Q6 0.7 6.4 1.2 L6.9 1.9 H13.5 Q14.4 1.9 14.4 2.8 V11.6 Q14.4 12.5 13.5 12.5 H1.5 Q0.6 12.5 0.6 11.6 Z" fill="#fcc70f"/><path d="M0.6 3 H14.4" stroke="#f4b800" stroke-width=".5"/></svg>
<div class="t" style="left:26px;top:612.00px;font-size:13.7px;color:#1e1e1e;font-weight:normal;">Downloads</div>
<div class="t" style="left:254.5px;top:612.00px;font-size:13.7px;color:#1e1e1e;font-weight:normal;">Directory</div>
<div class="t" style="left:374.5px;top:612.00px;font-size:13.7px;color:#1e1e1e;font-weight:normal;">02/23/2022 14:2...</div>
<svg class="a" style="left:694.3px;top:331.40000000000003px" width="16" height="14" viewBox="0 0 16 14"><path d="M0.6 1.6 Q0.6 0.7 1.5 0.7 H5.4 Q6 0.7 6.4 1.2 L6.9 1.9 H13.5 Q14.4 1.9 14.4 2.8 V11.6 Q14.4 12.5 13.5 12.5 H1.5 Q0.6 12.5 0.6 11.6 Z" fill="#fcc70f"/><path d="M0.6 3 H14.4" stroke="#f4b800" stroke-width=".5"/></svg>
<div class="t" style="left:716px;top:332.00px;font-size:13.7px;color:#1e1e1e;font-weight:normal;">..</div>
<svg class="a" style="left:694.3px;top:351.40000000000003px" width="16" height="14" viewBox="0 0 16 14"><path d="M0.6 1.6 Q0.6 0.7 1.5 0.7 H5.4 Q6 0.7 6.4 1.2 L6.9 1.9 H13.5 Q14.4 1.9 14.4 2.8 V11.6 Q14.4 12.5 13.5 12.5 H1.5 Q0.6 12.5 0.6 11.6 Z" fill="#fcc70f"/><path d="M0.6 3 H14.4" stroke="#f4b800" stroke-width=".5"/></svg>
<div class="t" style="left:716px;top:352.00px;font-size:13.7px;color:#1e1e1e;font-weight:normal;">.ansible</div>
<div class="t" style="left:920px;top:352.00px;font-size:13.7px;color:#1e1e1e;font-weight:normal;">Directory</div>
<div class="t" style="left:1000px;top:352.00px;font-size:13.7px;color:#1e1e1e;font-weight:normal;">02/11/2021 1...</div>
<div class="t" style="left:1100px;top:352.00px;font-size:13.7px;color:#1e1e1e;font-weight:normal;">drwxr<span style="letter-spacing:1.3px">-</span>xr<span style="letter-spacing:1.3px">-</span>x</div>
<div class="t" style="left:1180px;top:352.00px;font-size:13.7px;color:#1e1e1e;font-weight:normal;">johnstravel...</div>
<svg class="a" style="left:694.3px;top:371.40000000000003px" width="16" height="14" viewBox="0 0 16 14"><path d="M0.6 1.6 Q0.6 0.7 1.5 0.7 H5.4 Q6 0.7 6.4 1.2 L6.9 1.9 H13.5 Q14.4 1.9 14.4 2.8 V11.6 Q14.4 12.5 13.5 12.5 H1.5 Q0.6 12.5 0.6 11.6 Z" fill="#fcc70f"/><path d="M0.6 3 H14.4" stroke="#f4b800" stroke-width=".5"/></svg>
<div class="t" style="left:716px;top:372.00px;font-size:13.7px;color:#1e1e1e;font-weight:normal;">.ansible_async</div>
<div class="t" style="left:920px;top:372.00px;font-size:13.7px;color:#1e1e1e;font-weight:normal;">Directory</div>
<div class="t" style="left:1000px;top:372.00px;font-size:13.7px;color:#1e1e1e;font-weight:normal;">01/04/2022 1...</div>
<div class="t" style="left:1100px;top:372.00px;font-size:13.7px;color:#1e1e1e;font-weight:normal;">drwxr<span style="letter-spacing:1.3px">-</span>xr<span style="letter-spacing:1.3px">-</span>x</div>
<div class="t" style="left:1180px;top:372.00px;font-size:13.7px;color:#1e1e1e;font-weight:normal;">johnstravel...</div>
<svg class="a" style="left:694.3px;top:391.40000000000003px" width="16" height="14" viewBox="0 0 16 14"><path d="M0.6 1.6 Q0.6 0.7 1.5 0.7 H5.4 Q6 0.7 6.4 1.2 L6.9 1.9 H13.5 Q14.4 1.9 14.4 2.8 V11.6 Q14.4 12.5 13.5 12.5 H1.5 Q0.6 12.5 0.6 11.6 Z" fill="#fcc70f"/><path d="M0.6 3 H14.4" stroke="#f4b800" stroke-width=".5"/></svg>
<div class="t" style="left:716px;top:392.00px;font-size:13.7px;color:#1e1e1e;font-weight:normal;">.cache</div>
<div class="t" style="left:920px;top:392.00px;font-size:13.7px;color:#1e1e1e;font-weight:normal;">Directory</div>
<div class="t" style="left:1000px;top:392.00px;font-size:13.7px;color:#1e1e1e;font-weight:normal;">02/15/2022 1...</div>
<div class="t" style="left:1100px;top:392.00px;font-size:13.7px;color:#1e1e1e;font-weight:normal;">drwx<span style="letter-spacing:1.3px">-</span><span style="letter-spacing:1.3px">-</span><span style="letter-spacing:1.3px">-</span><span style="letter-spacing:1.3px">-</span><span style="letter-spacing:1.3px">-</span><span style="letter-spacing:1.3px">-</span></div>
<div class="t" style="left:1180px;top:392.00px;font-size:13.7px;color:#1e1e1e;font-weight:normal;">johnstravel...</div>
<svg class="a" style="left:694.3px;top:411.40000000000003px" width="16" height="14" viewBox="0 0 16 14"><path d="M0.6 1.6 Q0.6 0.7 1.5 0.7 H5.4 Q6 0.7 6.4 1.2 L6.9 1.9 H13.5 Q14.4 1.9 14.4 2.8 V11.6 Q14.4 12.5 13.5 12.5 H1.5 Q0.6 12.5 0.6 11.6 Z" fill="#fcc70f"/><path d="M0.6 3 H14.4" stroke="#f4b800" stroke-width=".5"/></svg>
<div class="t" style="left:716px;top:412.00px;font-size:13.7px;color:#1e1e1e;font-weight:normal;">.ssh</div>
<div class="t" style="left:920px;top:412.00px;font-size:13.7px;color:#1e1e1e;font-weight:normal;">Directory</div>
<div class="t" style="left:1000px;top:412.00px;font-size:13.7px;color:#1e1e1e;font-weight:normal;">02/11/2021 1...</div>
<div class="t" style="left:1100px;top:412.00px;font-size:13.7px;color:#1e1e1e;font-weight:normal;">drwx<span style="letter-spacing:1.3px">-</span><span style="letter-spacing:1.3px">-</span><span style="letter-spacing:1.3px">-</span><span style="letter-spacing:1.3px">-</span><span style="letter-spacing:1.3px">-</span><span style="letter-spacing:1.3px">-</span></div>
<div class="t" style="left:1180px;top:412.00px;font-size:13.7px;color:#1e1e1e;font-weight:normal;">johnstravel...</div>
<svg class="a" style="left:694.3px;top:431.40000000000003px" width="16" height="14" viewBox="0 0 16 14"><path d="M0.6 1.6 Q0.6 0.7 1.5 0.7 H5.4 Q6 0.7 6.4 1.2 L6.9 1.9 H13.5 Q14.4 1.9 14.4 2.8 V11.6 Q14.4 12.5 13.5 12.5 H1.5 Q0.6 12.5 0.6 11.6 Z" fill="#fcc70f"/><path d="M0.6 3 H14.4" stroke="#f4b800" stroke-width=".5"/></svg>
<div class="t" style="left:716px;top:432.00px;font-size:13.7px;color:#1e1e1e;font-weight:normal;">.wp-cli</div>
<div class="t" style="left:920px;top:432.00px;font-size:13.7px;color:#1e1e1e;font-weight:normal;">Directory</div>
<div class="t" style="left:1000px;top:432.00px;font-size:13.7px;color:#1e1e1e;font-weight:normal;">02/11/2021 1...</div>
<div class="t" style="left:1100px;top:432.00px;font-size:13.7px;color:#1e1e1e;font-weight:normal;">drwxr<span style="letter-spacing:1.3px">-</span>xr<span style="letter-spacing:1.3px">-</span>x</div>
<div class="t" style="left:1180px;top:432.00px;font-size:13.7px;color:#1e1e1e;font-weight:normal;">johnstravel...</div>
<svg class="a" style="left:694.3px;top:451.40000000000003px" width="16" height="14" viewBox="0 0 16 14"><path d="M0.6 1.6 Q0.6 0.7 1.5 0.7 H5.4 Q6 0.7 6.4 1.2 L6.9 1.9 H13.5 Q14.4 1.9 14.4 2.8 V11.6 Q14.4 12.5 13.5 12.5 H1.5 Q0.6 12.5 0.6 11.6 Z" fill="#fcc70f"/><path d="M0.6 3 H14.4" stroke="#f4b800" stroke-width=".5"/></svg>
<div class="t" style="left:716px;top:452.00px;font-size:13.7px;color:#1e1e1e;font-weight:normal;">logs</div>
<div class="t" style="left:920px;top:452.00px;font-size:13.7px;color:#1e1e1e;font-weight:normal;">Directory</div>
<div class="t" style="left:1000px;top:452.00px;font-size:13.7px;color:#1e1e1e;font-weight:normal;">02/22/2022 1...</div>
<div class="t" style="left:1100px;top:452.00px;font-size:13.7px;color:#1e1e1e;font-weight:normal;">drwxr<span style="letter-spacing:1.3px">-</span>xr<span style="letter-spacing:1.3px">-</span>x</div>
<div class="t" style="left:1180px;top:452.00px;font-size:13.7px;color:#1e1e1e;font-weight:normal;">johnstravel...</div>
<svg class="a" style="left:694.3px;top:471.40000000000003px" width="16" height="14" viewBox="0 0 16 14"><path d="M0.6 1.6 Q0.6 0.7 1.5 0.7 H5.4 Q6 0.7 6.4 1.2 L6.9 1.9 H13.5 Q14.4 1.9 14.4 2.8 V11.6 Q14.4 12.5 13.5 12.5 H1.5 Q0.6 12.5 0.6 11.6 Z" fill="#fcc70f"/><path d="M0.6 3 H14.4" stroke="#f4b800" stroke-width=".5"/></svg>
<div class="t" style="left:716px;top:472.00px;font-size:13.7px;color:#1e1e1e;font-weight:normal;">mysqleditor</div>
<div class="t" style="left:920px;top:472.00px;font-size:13.7px;color:#1e1e1e;font-weight:normal;">Directory</div>
<div class="t" style="left:1000px;top:472.00px;font-size:13.7px;color:#1e1e1e;font-weight:normal;">02/15/2022 1...</div>
<div class="t" style="left:1100px;top:472.00px;font-size:13.7px;color:#1e1e1e;font-weight:normal;">drwxr<span style="letter-spacing:1.3px">-</span>xr<span style="letter-spacing:1.3px">-</span>x</div>
<div class="t" style="left:1180px;top:472.00px;font-size:13.7px;color:#1e1e1e;font-weight:normal;">johnstravel...</div>
<svg class="a" style="left:694.3px;top:491.40000000000003px" width="16" height="14" viewBox="0 0 16 14"><path d="M0.6 1.6 Q0.6 0.7 1.5 0.7 H5.4 Q6 0.7 6.4 1.2 L6.9 1.9 H13.5 Q14.4 1.9 14.4 2.8 V11.6 Q14.4 12.5 13.5 12.5 H1.5 Q0.6 12.5 0.6 11.6 Z" fill="#fcc70f"/><path d="M0.6 3 H14.4" stroke="#f4b800" stroke-width=".5"/></svg>
<div class="t" style="left:716px;top:492.00px;font-size:13.7px;color:#1e1e1e;font-weight:normal;">private</div>
<div class="t" style="left:920px;top:492.00px;font-size:13.7px;color:#1e1e1e;font-weight:normal;">Directory</div>
<div class="t" style="left:1000px;top:492.00px;font-size:13.7px;color:#1e1e1e;font-weight:normal;">02/11/2021 1...</div>
<div class="t" style="left:1100px;top:492.00px;font-size:13.7px;color:#1e1e1e;font-weight:normal;">drwxr<span style="letter-spacing:1.3px">-</span>xr<span style="letter-spacing:1.3px">-</span>x</div>
<div class="t" style="left:1180px;top:492.00px;font-size:13.7px;color:#1e1e1e;font-weight:normal;">johnstravel...</div>
<svg class="a" style="left:694.3px;top:511.40000000000003px" width="16" height="14" viewBox="0 0 16 14"><path d="M0.6 1.6 Q0.6 0.7 1.5 0.7 H5.4 Q6 0.7 6.4 1.2 L6.9 1.9 H13.5 Q14.4 1.9 14.4 2.8 V11.6 Q14.4 12.5 13.5 12.5 H1.5 Q0.6 12.5 0.6 11.6 Z" fill="#fcc70f"/><path d="M0.6 3 H14.4" stroke="#f4b800" stroke-width=".5"/></svg>
<div class="t" style="left:716px;top:512.00px;font-size:13.7px;color:#1e1e1e;font-weight:normal;">public</div>
<div class="t" style="left:920px;top:512.00px;font-size:13.7px;color:#1e1e1e;font-weight:normal;">Directory</div>
<div class="t" style="left:1000px;top:512.00px;font-size:13.7px;color:#1e1e1e;font-weight:normal;">02/22/2022 1...</div>
<div class="t" style="left:1100px;top:512.00px;font-size:13.7px;color:#1e1e1e;font-weight:normal;">drwxr<span style="letter-spacing:1.3px">-</span>xr<span style="letter-spacing:1.3px">-</span>x</div>
<div class="t" style="left:1180px;top:512.00px;font-size:13.7px;color:#1e1e1e;font-weight:normal;">johnstravel...</div>
<svg class="a" style="left:694.3px;top:531.4px" width="16" height="14" viewBox="0 0 16 14"><path d="M0.6 1.6 Q0.6 0.7 1.5 0.7 H5.4 Q6 0.7 6.4 1.2 L6.9 1.9 H13.5 Q14.4 1.9 14.4 2.8 V11.6 Q14.4 12.5 13.5 12.5 H1.5 Q0.6 12.5 0.6 11.6 Z" fill="#fcc70f"/><path d="M0.6 3 H14.4" stroke="#f4b800" stroke-width=".5"/></svg>
<div class="t" style="left:716px;top:532.00px;font-size:13.7px;color:#1e1e1e;font-weight:normal;">ssl_certificates</div>
<div class="t" style="left:920px;top:532.00px;font-size:13.7px;color:#1e1e1e;font-weight:normal;">Directory</div>
<div class="t" style="left:1000px;top:532.00px;font-size:13.7px;color:#1e1e1e;font-weight:normal;">02/11/2021 1...</div>
<div class="t" style="left:1100px;top:532.00px;font-size:13.7px;color:#1e1e1e;font-weight:normal;">drwxr<span style="letter-spacing:1.3px">-</span>xr<span style="letter-spacing:1.3px">-</span>x</div>
<div class="t" style="left:1180px;top:532.00px;font-size:13.7px;color:#1e1e1e;font-weight:normal;">johnstravel...</div>
<svg class="a" style="left:694.5px;top:551.1px" width="16" height="16" viewBox="0 0 16 16"><path d="M2.5 0.5 H9.5 L13.5 4.5 V15.5 H2.5 Z" fill="#fff" stroke="#e2e2e2" stroke-width="1"/><path d="M9.5 0.5 V4.5 H13.5" fill="none" stroke="#ebebeb" stroke-width="1"/></svg>
<div class="t" style="left:716px;top:552.00px;font-size:13.7px;color:#1e1e1e;font-weight:normal;">.bash_logout</div>
<div class="t" style="right:372px;top:552.00px;font-size:13.7px;color:#1e1e1e">220</div>
<div class="t" style="left:920px;top:552.00px;font-size:13.7px;color:#1e1e1e;font-weight:normal;">File</div>
<div class="t" style="left:1000px;top:552.00px;font-size:13.7px;color:#1e1e1e;font-weight:normal;">02/25/2020 ...</div>
<div class="t" style="left:1100px;top:552.00px;font-size:13.7px;color:#1e1e1e;font-weight:normal;"><span style="letter-spacing:1.3px">-</span>rw<span style="letter-spacing:1.3px">-</span>r<span style="letter-spacing:1.3px">-</span><span style="letter-spacing:1.3px">-</span>r<span style="letter-spacing:1.3px">-</span><span style="letter-spacing:1.3px">-</span></div>
<div class="t" style="left:1180px;top:552.00px;font-size:13.7px;color:#1e1e1e;font-weight:normal;">johnstravel...</div>
<svg class="a" style="left:694.5px;top:571.1px" width="16" height="16" viewBox="0 0 16 16"><path d="M2.5 0.5 H9.5 L13.5 4.5 V15.5 H2.5 Z" fill="#fff" stroke="#e2e2e2" stroke-width="1"/><path d="M9.5 0.5 V4.5 H13.5" fill="none" stroke="#ebebeb" stroke-width="1"/></svg>
<div class="t" style="left:716px;top:572.00px;font-size:13.7px;color:#1e1e1e;font-weight:normal;">.bashrc</div>
<div class="t" style="right:372px;top:572.00px;font-size:13.7px;color:#1e1e1e">3,808</div>
<div class="t" style="left:920px;top:572.00px;font-size:13.7px;color:#1e1e1e;font-weight:normal;">File</div>
<div class="t" style="left:1000px;top:572.00px;font-size:13.7px;color:#1e1e1e;font-weight:normal;">02/11/2021 1...</div>
<div class="t" style="left:1100px;top:572.00px;font-size:13.7px;color:#1e1e1e;font-weight:normal;"><span style="letter-spacing:1.3px">-</span>rw<span style="letter-spacing:1.3px">-</span>r<span style="letter-spacing:1.3px">-</span><span style="letter-spacing:1.3px">-</span>r<span style="letter-spacing:1.3px">-</span><span style="letter-spacing:1.3px">-</span></div>
<div class="t" style="left:1180px;top:572.00px;font-size:13.7px;color:#1e1e1e;font-weight:normal;">johnstravel...</div>
<svg class="a" style="left:694.5px;top:591.1px" width="16" height="16" viewBox="0 0 16 16"><path d="M2.5 0.5 H9.5 L13.5 4.5 V15.5 H2.5 Z" fill="#fff" stroke="#e2e2e2" stroke-width="1"/><path d="M9.5 0.5 V4.5 H13.5" fill="none" stroke="#ebebeb" stroke-width="1"/></svg>
<div class="t" style="left:716px;top:592.00px;font-size:13.7px;color:#1e1e1e;font-weight:normal;">.profile</div>
<div class="t" style="right:372px;top:592.00px;font-size:13.7px;color:#1e1e1e">807</div>
<div class="t" style="left:920px;top:592.00px;font-size:13.7px;color:#1e1e1e;font-weight:normal;">File</div>
<div class="t" style="left:1000px;top:592.00px;font-size:13.7px;color:#1e1e1e;font-weight:normal;">02/25/2020 ...</div>
<div class="t" style="left:1100px;top:592.00px;font-size:13.7px;color:#1e1e1e;font-weight:normal;"><span style="letter-spacing:1.3px">-</span>rw<span style="letter-spacing:1.3px">-</span>r<span style="letter-spacing:1.3px">-</span><span style="letter-spacing:1.3px">-</span>r<span style="letter-spacing:1.3px">-</span><span style="letter-spacing:1.3px">-</span></div>
<div class="t" style="left:1180px;top:592.00px;font-size:13.7px;color:#1e1e1e;font-weight:normal;">johnstravel...</div>
<div class="a" style="left:0px;top:627px;width:1285px;height:22px;background:linear-gradient(#e2e2e2,#ececec 3px,#ececec);"></div>
<div class="a" style="left:686px;top:627px;width:7px;height:22px;background:#e6e6e6;"></div>
<div class="a" style="left:687.6px;top:627px;width:3.6px;height:22px;background:#f2f2f2;"></div>
<div class="a" style="left:0px;top:649px;width:1285px;height:1px;background:#d0d0d0;"></div>
<div class="t" style="left:7.5px;top:630.53px;font-size:11.9px;color:#1e1e1e;font-weight:normal;">3 files and 22 directories. Total size: 14,538 bytes</div>
<div class="t" style="left:698px;top:630.53px;font-size:11.9px;color:#1e1e1e;font-weight:normal;">3 files and 10 directories. Total size: 4,835 bytes</div>
<div class="a" style="left:2px;top:655px;width:1281px;height:39px;background:#fff;"></div>
<div class="a" style="left:2px;top:671px;width:1281px;height:1px;background:#ededed;"></div>
<div class="t" style="left:6.5px;top:657.80px;font-size:11.7px;color:#1e1e1e;font-weight:normal;">Server/Local file</div>
<div class="t" style="left:188.5px;top:657.80px;font-size:11.7px;color:#1e1e1e;font-weight:normal;">Direction</div>
<div class="t" style="left:246.4px;top:657.80px;font-size:11.7px;color:#1e1e1e;font-weight:normal;">Remote file</div>
<div class="t" style="right:787.6px;top:657.80px;font-size:11.7px;color:#1e1e1e">Size</div>
<div class="t" style="left:506.2px;top:657.80px;font-size:11.7px;color:#1e1e1e;font-weight:normal;">Priority</div>
<div class="t" style="left:566.2px;top:657.80px;font-size:11.7px;color:#1e1e1e;font-weight:normal;">Status</div>
<div class="a" style="left:182px;top:657px;width:1px;height:12px;background:#dedede;"></div>
<div class="a" style="left:242px;top:657px;width:1px;height:12px;background:#dedede;"></div>
<div class="a" style="left:422px;top:657px;width:1px;height:12px;background:#dedede;"></div>
<div class="a" style="left:502px;top:657px;width:1px;height:12px;background:#dedede;"></div>
<div class="a" style="left:562px;top:657px;width:1px;height:12px;background:#dedede;"></div>
<div class="a" style="left:712px;top:657px;width:1px;height:12px;background:#dedede;"></div>
<div class="a" style="left:0px;top:694px;width:1285px;height:2px;background:#c9c9c9;"></div>
<div class="a" style="left:0px;top:696px;width:1285px;height:1.4px;background:#f3f3f3;"></div>
<div class="a" style="left:0px;top:697.4px;width:1285px;height:1.6px;background:#c6c6c6;"></div>
<div class="a" style="left:0px;top:699px;width:1285px;height:24px;background:linear-gradient(#d5d5d5,#efefef);"></div>
<div class="a" style="left:0px;top:723px;width:1285px;height:1px;background:#f7f7f7;"></div>
<div class="a" style="left:5.7px;top:698px;width:96.3px;height:21.2px;background:linear-gradient(#fdfdfd,#f2f2f2);border:1px solid #c4c4c4;border-top:none;border-radius:0 0 4px 4px"></div>
<div class="t" style="left:13.9px;top:701.56px;font-size:13.4px;color:#111;font-weight:bold;">Queued files</div>
<div class="a" style="left:102.8px;top:699px;width:116px;height:20.2px;background:linear-gradient(#e9e9e9,#e3e3e3 50%,#dddddd);border:1px solid #bdbdbd;border-top:none;border-radius:0 0 4px 4px"></div>
<div class="t" style="left:110.5px;top:701.56px;font-size:13.4px;color:#1e1e1e;font-weight:normal;">Failed transfers</div>
<div class="a" style="left:220px;top:699px;width:149.5px;height:20.2px;background:linear-gradient(#e9e9e9,#e3e3e3 50%,#dddddd);border:1px solid #bdbdbd;border-top:none;border-radius:0 0 4px 4px"></div>
<div class="t" style="left:227.8px;top:701.56px;font-size:13.4px;color:#1e1e1e;font-weight:normal;">Successful transfers</div>
<div class="a" style="left:0px;top:724px;width:1285px;height:17px;background:#ececec;"></div>
<svg class="a" style="left:1076px;top:722px" width="20" height="19">
<path d="M6 9 V6.9 A4 4 0 0 1 14 6.9 V9" stroke="#6a6a6a" stroke-width="2.1" fill="none"/>
<rect x="2.4" y="8.3" width="15.5" height="10.7" rx="1.5" fill="#f0c02a"/>
<path d="M9.4 11.2 H11 L10.8 15.6 H9.6 Z" fill="#5a4800"/>
</svg>
<svg class="a" style="left:1097px;top:724px" width="17" height="17">
<circle cx="8.4" cy="8.3" r="6.8" fill="#fafafa" stroke="#7a7a7a" stroke-width="1.3"/>
<path d="M5.2 11.6 A4.6 4.6 0 1 1 11.6 11.6" stroke="#6a6a6a" stroke-width="1.5" fill="none"/>
<path d="M8.2 9.4 L11 5.6" stroke="#888" stroke-width="1.4"/>
</svg>
<svg class="a" style="left:1250px;top:725px" width="28" height="13">
<defs><radialGradient id="gg" cx=".4" cy=".35" r=".7"><stop offset="0" stop-color="#9be38b"/><stop offset=".5" stop-color="#2f9a2a"/><stop offset="1" stop-color="#1f5e1a"/></radialGradient>
<radialGradient id="rg" cx=".4" cy=".35" r=".7"><stop offset="0" stop-color="#e88a8a"/><stop offset=".5" stop-color="#a01a1f"/><stop offset="1" stop-color="#601015"/></radialGradient></defs>
<circle cx="6.5" cy="6.5" r="4.8" fill="url(#gg)"/>
<circle cx="21.5" cy="6.5" r="4.8" fill="url(#rg)"/>
</svg>
<div class="t" style="left:1125px;top:724.60px;font-size:11.7px;color:#1e1e1e;font-weight:normal;">Queue: empty</div>
<div class="a" style="left:0;top:0;width:10px;height:10px;background:radial-gradient(circle at 100% 100%,rgba(255,255,255,0) 9px,#fff 10.5px)"></div>
<div class="a" style="right:0;top:0;width:10px;height:10px;background:radial-gradient(circle at 0% 100%,rgba(255,255,255,0) 9px,#fff 10.5px)"></div>
<div class="a" style="left:0;bottom:0;width:10px;height:10px;background:radial-gradient(circle at 100% 0%,rgba(255,255,255,0) 9px,#fff 10.5px)"></div>
<div class="a" style="right:0;bottom:0;width:10px;height:10px;background:radial-gradient(circle at 0% 0%,rgba(255,255,255,0) 9px,#fff 10.5px)"></div>
</body></html>
